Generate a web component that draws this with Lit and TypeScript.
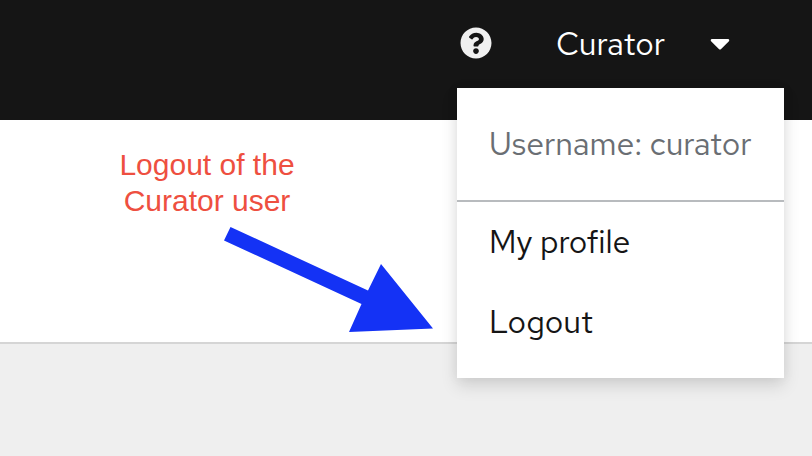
import { LitElement, html, css } from "lit";
import { customElement } from "lit/decorators.js";

@customElement("app-root")
class AppRoot extends LitElement {
  static styles = css`
    :host {
      display: flex;
      flex-direction: column;
      position: relative;
      width: 812px;
      height: 456px;
      overflow: hidden;
      background: #efefef;
      font-family: "Red Hat Text", Inter, sans-serif;
      font-size: 32px;
      line-height: 48px;
      color: #151515;
    }
    svg {
      display: block;
      flex: none;
    }
    .masthead {
      box-sizing: border-box;
      height: 120px;
      flex: none;
      display: flex;
      align-items: flex-start;
      padding: 20px 82px 0 460px;
      background: #151515;
      color: #fff;
    }
    .help {
      margin-top: 7px;
      fill: #f0f0f0;
    }
    .user {
      flex: 1;
      margin-left: 64px;
      white-space: nowrap;
    }
    .caret {
      margin-top: 7px;
      fill: #fff;
    }
    .panel {
      box-sizing: border-box;
      height: 224px;
      flex: none;
      display: flex;
      padding: 27px 0 0 117px;
      background: #fff;
      border-bottom: 2px solid #d5d5d5;
    }
    .note {
      width: 180px;
      height: 72px;
      text-align: center;
      font-family: "Liberation Sans", sans-serif;
      font-size: 30px;
      line-height: 36px;
      white-space: nowrap;
      color: #ee4f40;
    }
    .arrow {
      position: absolute;
      left: 220px;
      top: 222px;
      fill: #1432f5;
    }
    .menu {
      position: absolute;
      left: 457px;
      top: 88px;
      width: 327px;
      height: 290px;
      background: #fff;
      box-shadow: 0 8px 16px rgba(3, 3, 3, 0.12), 0 0 12px rgba(3, 3, 3, 0.06);
      white-space: nowrap;
    }
    .name {
      box-sizing: border-box;
      height: 114px;
      padding: 32px 32px 0;
      border-bottom: 2px solid #b8bbbe;
      letter-spacing: -0.1px;
      color: #6a6e73;
    }
    .item {
      height: 48px;
      padding: 16px 32px;
    }
  `;

  render() {
    return html`
      <header class="masthead">
        <svg class="help" width="32" height="32" viewBox="0 0 512 512">
          <path d="M504 256c0 136.997-111.043 248-248 248S8 392.997 8 256C8 119.083 119.043 8 256 8s248 111.083 248 248zM262.655 90c-54.497 0-89.255 22.957-116.549 63.758-3.536 5.286-2.353 12.415 2.715 16.258l34.699 26.31c5.205 3.947 12.621 3.008 16.665-2.122 17.864-22.658 30.113-35.797 57.303-35.797 20.429 0 45.698 13.148 45.698 32.958 0 14.976-12.363 22.667-32.534 33.976C247.128 238.528 216 254.941 216 296v4c0 6.627 5.373 12 12 12h56c6.627 0 12-5.373 12-12v-1.333c0-28.462 83.186-29.647 83.186-106.667 0-58.002-60.165-102-116.531-102zM256 338c-25.365 0-46 20.635-46 46 0 25.364 20.635 46 46 46s46-20.636 46-46c0-25.365-20.635-46-46-46z"></path>
        </svg>
        <span class="user">Curator</span>
        <svg class="caret" width="20" height="32" viewBox="0 0 320 512">
          <path d="M31.3 192h257.3c17.8 0 26.7 21.5 14.1 34.1L174.1 354.7c-7.8 7.8-20.5 7.8-28.3 0L17.2 226.1C4.6 213.5 13.5 192 31.3 192z"></path>
        </svg>
      </header>
      <main class="panel">
        <div class="note">Logout of the<br />Curator user</div>
      </main>
      <svg class="arrow" width="216" height="112" viewBox="220 222 216 112">
        <path d="M230.5 227L368 290.5L381 264L433 328.5L349 332L361.5 304L224 240.5Z"></path>
      </svg>
      <nav class="menu">
        <div class="name">Username: curator</div>
        <div class="item">My profile</div>
        <div class="item">Logout</div>
      </nav>
    `;
  }
}
